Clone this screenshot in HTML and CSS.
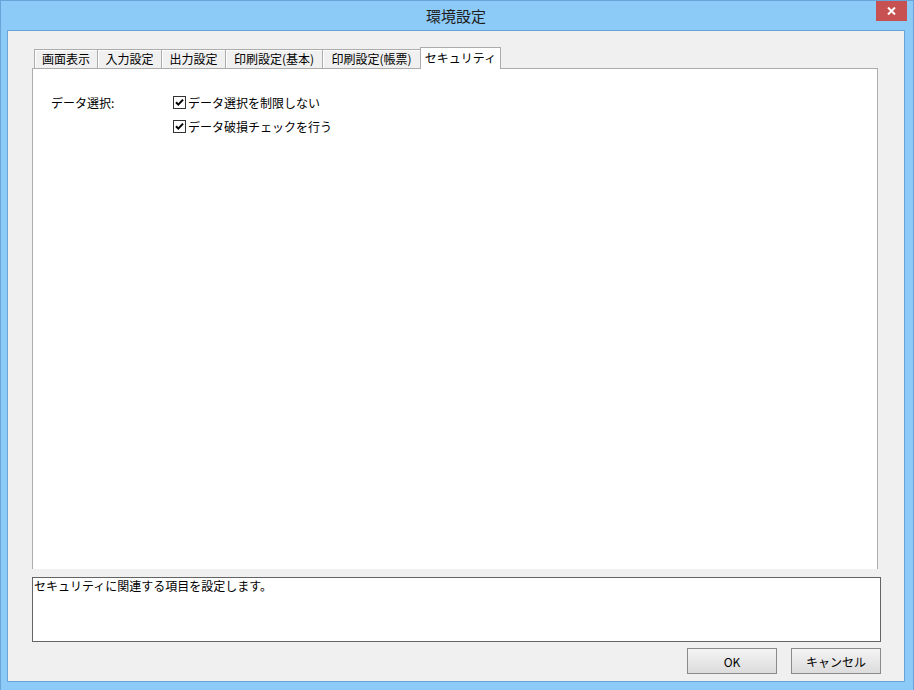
FILE: index.html
```html
<!DOCTYPE html>
<html lang="ja">
<head>
<meta charset="utf-8">
<title>環境設定</title>
<link rel="stylesheet" href="styles.css">
</head>
<body>
<div class="frame">
  <div class="titlebar">
    <div class="title">環境設定</div>
    <div class="close" aria-label="閉じる">
      <svg width="9" height="8" viewBox="0 0 9 8"><path d="M1 0.5 L8 7.5 M8 0.5 L1 7.5" stroke="#fff" stroke-width="2" fill="none"/></svg>
    </div>
  </div>
  <div class="client">
    <div class="tabs">
      <div class="tab t1">画面表示</div>
      <div class="tab t2">入力設定</div>
      <div class="tab t3">出力設定</div>
      <div class="tab t4">印刷設定(基本)</div>
      <div class="tab t5">印刷設定(帳票)</div>
      <div class="tab active t6">セキュリティ</div>
    </div>
    <div class="panel">
      <div class="form">
        <div class="label">データ選択:</div>
        <div class="checks">
          <label class="check"><span class="box"><svg width="11" height="11" viewBox="0 0 11 11"><path d="M2 5.2 L4.3 7.6 L9 2.6" stroke="#000" stroke-width="2" fill="none"/></svg></span>データ選択を制限しない</label>
          <label class="check"><span class="box"><svg width="11" height="11" viewBox="0 0 11 11"><path d="M2 5.2 L4.3 7.6 L9 2.6" stroke="#000" stroke-width="2" fill="none"/></svg></span>データ破損チェックを行う</label>
        </div>
      </div>
    </div>
    <div class="desc">セキュリティに関連する項目を設定します。</div>
    <div class="buttons">
      <button class="btn">OK</button>
      <button class="btn">キャンセル</button>
    </div>
  </div>
</div>
</body>
</html>
```

FILE: styles.css
```css
html, body {
  margin: 0;
  padding: 0;
}
body {
  width: 914px;
  height: 690px;
  overflow: hidden;
  font-family: "Noto Sans CJK JP", "Noto Sans", sans-serif;
  font-size: 12px;
  color: #000;
}
.frame {
  box-sizing: border-box;
  width: 914px;
  height: 690px;
  background: #8ccaf8;
  border: 1px solid #6aa3d8;
  border-bottom: none;
  display: flex;
  flex-direction: column;
}
.titlebar {
  height: 29px;
  position: relative;
  display: flex;
  align-items: center;
  justify-content: center;
}
.title {
  font-size: 15px;
  color: #1e1e1e;
  line-height: 20px;
  margin-top: 1px;
  margin-left: -2px;
}
.close {
  position: absolute;
  top: 0;
  right: 6px;
  width: 31px;
  height: 20px;
  background: #c75050;
  display: flex;
  align-items: center;
  justify-content: center;
}
.close svg { display: block; }
.client {
  box-sizing: border-box;
  margin: 0 8px 8px 6px;
  flex: 1;
  background: #f0f0f0;
  border: 1px solid #6aa3d8;
  display: flex;
  flex-direction: column;
}
.tabs {
  display: flex;
  align-items: flex-end;
  height: 21px;
  margin-top: 16px;
  padding-left: 26px;
}
.tab {
  box-sizing: border-box;
  height: 19px;
  border: 1px solid #acacac;
  border-bottom: none;
  background: #f0f0f0;
  box-shadow: inset 1px 1px 0 #fff;
  display: flex;
  align-items: center;
  justify-content: center;
  line-height: 14px;
  white-space: nowrap;
}
.tab + .tab { margin-left: -1px; }
.t1 { width: 64px; }
.t2 { width: 65px; }
.t3 { width: 65px; }
.t4 { width: 98px; }
.t5 { width: 99px; }
.tab.active {
  width: 81px;
  height: 22px;
  background: #fff;
  box-shadow: none;
  margin-bottom: -1px;
  position: relative;
  z-index: 1;
  padding-bottom: 2px;
}
.panel {
  box-sizing: border-box;
  margin-left: 24px;
  width: 846px;
  height: 501px;
  background: #fff;
  border: 1px solid #acacac;
  border-bottom: none;
  padding: 27px 0 0 18px;
}
.form {
  display: grid;
  grid-template-columns: 122px auto;
}
.label {
  line-height: 13px;
}
.checks {
  display: flex;
  flex-direction: column;
  gap: 11px;
}
.check {
  display: flex;
  align-items: center;
  height: 13px;
  line-height: 13px;
}
.box {
  box-sizing: border-box;
  width: 13px;
  height: 13px;
  border: 1px solid #333;
  background: #fff;
  margin-right: 2px;
  display: flex;
  align-items: center;
  justify-content: center;
}
.box svg { display: block; }
.desc {
  box-sizing: border-box;
  margin: 8px 0 0 24px;
  width: 849px;
  height: 65px;
  background: #fff;
  border: 1px solid #646464;
  padding: 1px 0 0 1px;
  line-height: 14px;
}
.buttons {
  display: flex;
  justify-content: flex-end;
  gap: 14px;
  margin: 6px 23px 0 0;
}
.btn {
  box-sizing: border-box;
  width: 90px;
  height: 26px;
  border: 1px solid #8a8a8a;
  border-radius: 0;
  background: linear-gradient(#f4f4f4, #dcdcdc);
  font-family: "Noto Sans CJK JP", "Noto Sans", sans-serif;
  font-size: 12px;
  font-weight: normal;
  color: #000;
  padding: 0;
}
```
